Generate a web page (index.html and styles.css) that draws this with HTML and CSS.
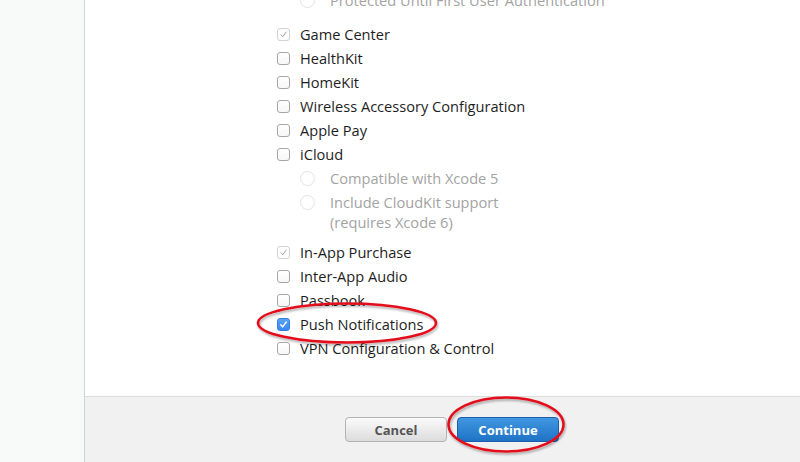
FILE: index.html
```html
<!DOCTYPE html>
<html>
<head>
<meta charset="utf-8">
<link rel="stylesheet" href="styles.css">
</head>
<body>
<div class="page">
  <aside class="sidebar"></aside>
  <main class="main">
    <section class="content">
      <ul class="list">
        <li class="row sub"><span class="radio"></span><span class="label muted">Protected Until First User Authentication</span></li>
        <li class="row group"><span class="cb cb-dis"><svg viewBox="0 0 13 13"><path d="M3.5 6.8 L5.6 9.2 L9.6 3.6" /></svg></span><span class="label">Game Center</span></li>
        <li class="row"><span class="cb"></span><span class="label">HealthKit</span></li>
        <li class="row"><span class="cb"></span><span class="label">HomeKit</span></li>
        <li class="row"><span class="cb"></span><span class="label">Wireless Accessory Configuration</span></li>
        <li class="row"><span class="cb"></span><span class="label">Apple Pay</span></li>
        <li class="row"><span class="cb"></span><span class="label">iCloud</span></li>
        <li class="row sub"><span class="radio"></span><span class="label muted">Compatible with Xcode 5</span></li>
        <li class="row sub"><span class="radio"></span><span class="label muted">Include CloudKit support<br>(requires Xcode 6)</span></li>
        <li class="row group-s"><span class="cb cb-dis"><svg viewBox="0 0 13 13"><path d="M3.5 6.8 L5.6 9.2 L9.6 3.6" /></svg></span><span class="label">In-App Purchase</span></li>
        <li class="row"><span class="cb"></span><span class="label">Inter-App Audio</span></li>
        <li class="row"><span class="cb"></span><span class="label">Passbook</span></li>
        <li class="row"><span class="cb cb-on"><svg viewBox="0 0 13 13"><path d="M3.3 6.9 L5.5 9.3 L9.8 3.5" /></svg></span><span class="label">Push Notifications</span></li>
        <li class="row"><span class="cb"></span><span class="label">VPN Configuration &amp; Control</span></li>
      </ul>
    </section>
    <footer class="footer">
      <button class="btn btn-cancel">Cancel</button>
      <button class="btn btn-continue">Continue</button>
    </footer>
  </main>
  <svg class="marks" width="800" height="462" viewBox="0 0 800 462">
    <defs>
      <filter id="sh" x="-10%" y="-30%" width="120%" height="160%">
        <feDropShadow dx="1" dy="2" stdDeviation="1.2" flood-color="#000" flood-opacity="0.3"/>
      </filter>
    </defs>
    <ellipse cx="347" cy="323" rx="89" ry="19.5" fill="none" stroke="#e3101b" stroke-width="2.6" filter="url(#sh)"/>
    <ellipse cx="506" cy="424.5" rx="57.5" ry="27" fill="none" stroke="#e3101b" stroke-width="2.6" filter="url(#sh)"/>
  </svg>
</div>
</body>
</html>
```
FILE: styles.css
```css
html, body {
  margin: 0;
  padding: 0;
  width: 800px;
  height: 462px;
  overflow: hidden;
  background: #ffffff;
  font-family: "Open Sans", "Liberation Sans", sans-serif;
}
.page {
  position: relative;
  display: flex;
  width: 800px;
  height: 462px;
}
.sidebar {
  width: 84px;
  flex: none;
  background: #f8f9f9;
  border-right: 1px solid #d4d4d4;
}
.main {
  flex: 1;
  display: flex;
  flex-direction: column;
}
.content {
  height: 396px;
  overflow: hidden;
  background: #fff;
}
.list {
  list-style: none;
  margin: -12px 0 0 0;
  padding: 0 0 0 192px;
}
.row {
  display: flex;
  align-items: flex-start;
  padding: 2px 0;
  line-height: 20px;
  font-size: 14.6px;
  color: #1e1e1e;
}
.row.group { margin-top: 10px; }
.row.group-s { margin-top: 6px; }
.row.sub { padding-left: 23px; }
.label { white-space: nowrap; }
.label.muted { color: #a3a3a3; }
.cb {
  width: 13px;
  height: 13px;
  box-sizing: border-box;
  border: 1px solid #a6a6a6;
  border-radius: 3px;
  background: linear-gradient(#fff, #f7f7f7);
  margin: 4px 10px 0 0;
  flex: none;
  display: flex;
}
.cb svg { width: 11px; height: 11px; }
.cb svg path { fill: none; stroke-linecap: round; stroke-linejoin: round; }
.cb-dis { border-color: #d2d2d2; background: #fdfdfd; }
.cb-dis svg path { stroke: #9a9a9a; stroke-width: 1.1; }
.cb-on { border-color: #2f7fe6; background: linear-gradient(#5aa2f7, #3a88ee); }
.cb-on svg path { stroke: #fff; stroke-width: 1.7; }
.radio {
  width: 15px;
  height: 15px;
  box-sizing: border-box;
  border: 1px solid #e2e2e2;
  border-radius: 50%;
  background: #fff;
  margin: 3px 15px 0 0;
  flex: none;
}
.footer {
  flex: 1;
  background: #f1f1f1;
  border-top: 1px solid #dcdcdc;
  display: flex;
  justify-content: center;
  align-items: flex-start;
  gap: 10px;
  padding: 20px 0 0 19px;
}
.btn {
  width: 102px;
  height: 25px;
  box-sizing: border-box;
  border-radius: 4px;
  font-family: "Open Sans", "Liberation Sans", sans-serif;
  font-weight: bold;
  font-size: 13px;
  padding: 0;
  line-height: 22px;
}
.btn-cancel {
  border: 1px solid #b4b4b4;
  background: linear-gradient(#fbfbfb, #dcdcdc);
  color: #555;
}
.btn-continue {
  border: 1px solid #1c5ea8;
  background: linear-gradient(#4197e0, #1f73c6);
  color: #fff;
}
.marks {
  position: absolute;
  left: 0;
  top: 0;
  pointer-events: none;
}
```
